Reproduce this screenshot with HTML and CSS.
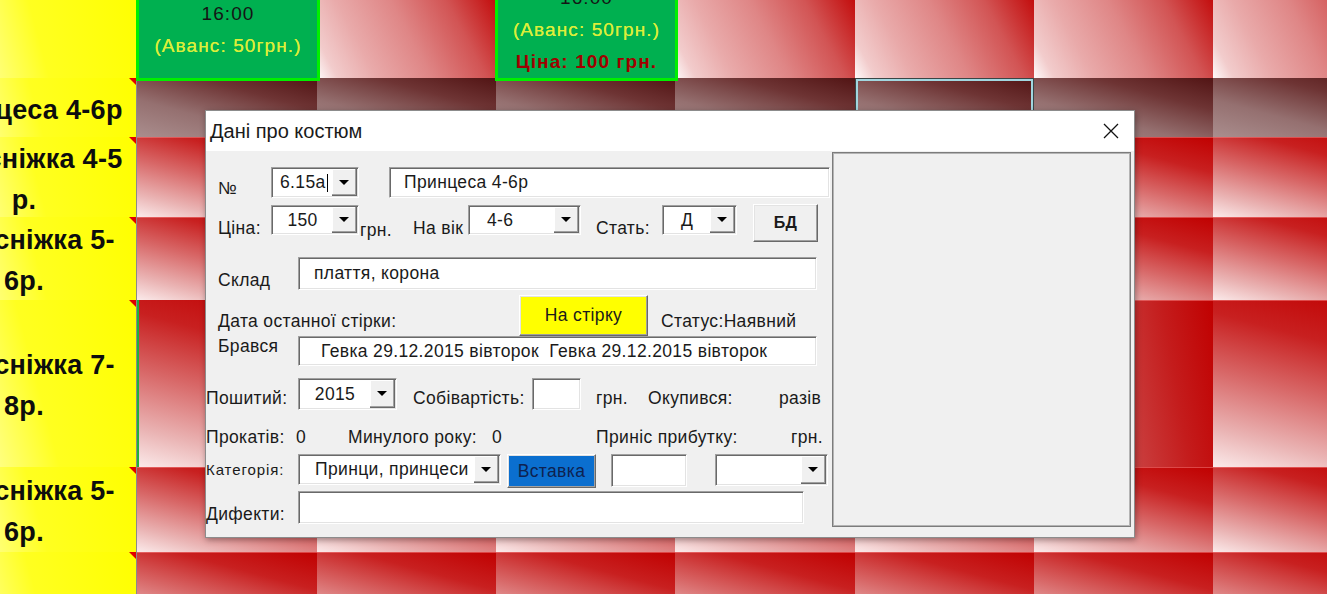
FILE: index.html
```html
<!DOCTYPE html>
<html lang="uk">
<head>
<meta charset="utf-8">
<title>Дані про костюм</title>
<link rel="stylesheet" href="styles.css">
</head>
<body>
<div class="sheet">
  <div class="cell y"></div>
  <div class="cell g"><div>16:00</div><div class="adv">(Аванс: 50грн.)</div></div>
  <div class="cell p"></div>
  <div class="cell g"><div>16:00</div><div class="adv">(Аванс: 50грн.)</div><div class="price">Ціна: 100 грн.</div></div>
  <div class="cell p"></div>
  <div class="cell p"></div>
  <div class="cell p"></div>
  <div class="cell p"></div>

  <div class="cell y name">Принцеса 4-6р</div>
  <div class="cell d"></div>
  <div class="cell d"></div>
  <div class="cell d"></div>
  <div class="cell d"></div>
  <div class="cell d sel"></div>
  <div class="cell d"></div>
  <div class="cell d"></div>

  <div class="cell y name">Білосніжка 4-5<br>р.</div>
  <div class="cell r"></div>
  <div class="cell r"></div>
  <div class="cell r"></div>
  <div class="cell r"></div>
  <div class="cell r"></div>
  <div class="cell r"></div>
  <div class="cell r"></div>

  <div class="cell y name">Білосніжка 5-<br>6р.</div>
  <div class="cell r"></div>
  <div class="cell r"></div>
  <div class="cell r"></div>
  <div class="cell r"></div>
  <div class="cell r"></div>
  <div class="cell r"></div>
  <div class="cell r"></div>

  <div class="cell y name">Білосніжка 7-<br>8р.</div>
  <div class="cell r gl"></div>
  <div class="cell r"></div>
  <div class="cell r"></div>
  <div class="cell r"></div>
  <div class="cell r"></div>
  <div class="cell h"></div>
  <div class="cell r"></div>

  <div class="cell y name">Білосніжка 5-<br>6р.</div>
  <div class="cell r"></div>
  <div class="cell r"></div>
  <div class="cell r"></div>
  <div class="cell r"></div>
  <div class="cell r"></div>
  <div class="cell r"></div>
  <div class="cell r"></div>

  <div class="cell y"></div>
  <div class="cell r"></div>
  <div class="cell r"></div>
  <div class="cell r"></div>
  <div class="cell r"></div>
  <div class="cell r"></div>
  <div class="cell r"></div>
  <div class="cell r"></div>
</div>

<div class="dialog">
  <div class="titlebar">
    <span>Дані про костюм</span>
    <svg class="close" width="16" height="16" viewBox="0 0 16 16"><path d="M1 1L15 15M15 1L1 15" stroke="#111" stroke-width="1.3" fill="none"/></svg>
  </div>
  <div class="body">
    <div class="form">
      <div class="row ra">
        <span class="lb">№</span>
        <div class="cb sunk"><div class="v">6.15a<span class="caret"></span></div><div class="dd"><i class="arr"></i></div></div>
        <div class="tb sunk">Принцеса 4-6р</div>
      </div>
      <div class="row rb">
        <span class="lb">Ціна:</span>
        <div class="cb sunk"><div class="v c">150</div><div class="dd"><i class="arr"></i></div></div>
        <span class="lb grn">грн.</span>
        <span class="lb">На вік</span>
        <div class="cb sunk"><div class="v">4-6</div><div class="dd"><i class="arr"></i></div></div>
        <span class="lb sex">Стать:</span>
        <div class="cb sunk"><div class="v c">Д</div><div class="dd"><i class="arr"></i></div></div>
        <div class="btn bd">БД</div>
      </div>
      <div class="row rc">
        <span class="lb">Склад</span>
        <div class="tb sunk">плаття, корона</div>
      </div>
      <div class="row rd">
        <span class="lb">Дата останної стірки:</span>
        <div class="btn wash">На стірку</div>
        <span class="lb st">Статус:Наявний</span>
      </div>
      <div class="row re">
        <span class="lb">Брався</span>
        <div class="tb sunk">Гевка 29.12.2015 вівторок&nbsp; Гевка 29.12.2015 вівторок</div>
      </div>
      <div class="row rf">
        <span class="lb">Пошитий:</span>
        <div class="cb sunk"><div class="v c">2015</div><div class="dd"><i class="arr"></i></div></div>
        <span class="lb pl">Собівартість:</span>
        <div class="tb sunk"></div>
        <span class="lb pl2">грн.</span>
        <span class="lb">Окупився:</span>
        <span class="lb">разів</span>
      </div>
      <div class="row rg">
        <span class="lb">Прокатів:</span>
        <span class="lb">0</span>
        <span class="lb">Минулого року:</span>
        <span class="lb">0</span>
        <span class="lb">Приніс прибутку:</span>
        <span class="lb">грн.</span>
      </div>
      <div class="row rh">
        <span class="lb small">Категорія:</span>
        <div class="cb sunk"><div class="v">Принци, принцеси</div><div class="dd"><i class="arr"></i></div></div>
        <div class="btn ins">Вставка</div>
        <div class="tb sunk"></div>
        <div class="cb sunk"><div class="v"></div><div class="dd"><i class="arr"></i></div></div>
      </div>
      <div class="row ri">
        <span class="lb">Дифекти:</span>
        <div class="tb sunk"></div>
      </div>
    </div>
    <div class="frame"></div>
  </div>
</div>
</body>
</html>
```

FILE: styles.css
```css
html, body {
  margin: 0;
  padding: 0;
}
body {
  width: 1327px;
  height: 594px;
  overflow: hidden;
  position: relative;
  background: #c00000;
  font-family: "Liberation Sans", Arial, sans-serif;
}

/* ---------- spreadsheet ---------- */
.sheet {
  display: grid;
  grid-template-columns: 225px 180px 179px 179px 180px 179px 179px 180px;
  grid-template-rows: 96px 59px 80px 83px 167px 85px 88px;
  margin: -18px 0 0 -88px;
  width: max-content;
}
.cell {
  position: relative;
  box-sizing: border-box;
}
.y {
  background: linear-gradient(75deg, #ffffe8 0%, #ffffa0 25%, #ffff20 55%, #ffff00 100%);
  border-right: 1px solid #8a8a8a;
}
.y::after {
  content: "";
  position: absolute;
  top: 0;
  right: 0;
  border-top: 7px solid #e00000;
  border-left: 7px solid transparent;
}
.name {
  display: flex;
  align-items: center;
  justify-content: center;
  text-align: center;
  font-weight: bold;
  font-size: 27px;
  letter-spacing: 0.3px;
  line-height: 41px;
  white-space: nowrap;
  color: #0d0d0d;
  padding-top: 5px;
}
.p {
  background: linear-gradient(62deg, #fefafa 0%, #f2cccc 9%, #e9aaaa 26%, #df8686 50%, #d25454 74%, #c00000 100%);
}
.d {
  background: linear-gradient(195deg, #521414 0%, #6e3434 30%, #957070 65%, #aa8e8e 100%);
}
.r {
  background: linear-gradient(15deg, #fbeaea 0%, #eab4b4 18%, #d86868 45%, #c82020 72%, #c00000 100%);
  box-shadow: inset 0 1px 0 rgba(255, 150, 150, 0.45);
}
.h {
  background: linear-gradient(80deg, #d47070 0%, #cc4c4c 40%, #c41c1c 75%, #c00000 100%);
  box-shadow: inset 0 1px 0 rgba(255, 150, 150, 0.45);
}
.gl {
  box-shadow: inset 2px 0 0 #1fae3c;
}
.sel {
  box-shadow: inset 0 0 0 1px #3a4646, inset 0 0 0 3px #a2d6df;
}
.g {
  background: #00b050;
  border: 3px solid #00f000;
  margin: 0 -3px -3px -1px;
  z-index: 1;
  display: flex;
  flex-direction: column;
  justify-content: center;
  align-items: center;
  font-size: 19px;
  letter-spacing: 1.1px;
  line-height: 32px;
  padding-bottom: 3px;
  color: #151515;
  white-space: nowrap;
}
.adv {
  color: #dcee3a;
  text-shadow: 0 0 0.4px #dcee3a;
}
.price {
  color: #a00000;
  font-weight: bold;
}

/* ---------- dialog ---------- */
.dialog {
  position: absolute;
  left: 205px;
  top: 110px;
  width: 930px;
  height: 428px;
  box-sizing: border-box;
  border: 1px solid #8c8c8c;
  background: #f0f0f0;
  box-shadow: 1px 2px 6px rgba(0, 0, 0, 0.35);
  display: flex;
  flex-direction: column;
  color: #1a1a1a;
}
.titlebar {
  height: 40px;
  flex: none;
  background: #fff;
  display: flex;
  align-items: center;
  justify-content: space-between;
  padding: 0 15px 0 4px;
  font-size: 20px;
}
.body {
  display: flex;
  flex: 1;
}
.form {
  width: 626px;
  flex: none;
  display: flex;
  flex-direction: column;
  font-size: 17.5px;
  letter-spacing: 0.35px;
}
.frame {
  width: 299px;
  height: 375px;
  margin-top: 1px;
  box-sizing: border-box;
  border: 1px solid #7c7c7c;
  box-shadow: inset 0 0 0 1px #b4b4b4;
  background: #f0f0f0;
}

.row {
  display: grid;
  align-items: start;
  flex: none;
}
.lb {
  line-height: 20px;
  white-space: nowrap;
}

.sunk {
  box-sizing: border-box;
  background: #fff;
  border: 1px solid;
  border-color: #a0a0a0 #ffffff #ffffff #a0a0a0;
  box-shadow: inset 1px 1px 0 #696969, inset -1px -1px 0 #e3e3e3;
}
.tb {
  display: flex;
  align-items: center;
  height: 100%;
  white-space: nowrap;
  overflow: hidden;
}
.cb {
  display: flex;
  height: 100%;
  padding: 1px;
}
.cb .v {
  flex: 1;
  display: flex;
  align-items: center;
  white-space: nowrap;
  overflow: hidden;
}
.cb .v.c {
  justify-content: center;
}
.dd {
  width: 25px;
  flex: none;
  box-sizing: border-box;
  background: #f0f0f0;
  border-right: 1px solid #696969;
  border-bottom: 1px solid #696969;
  box-shadow: inset -1px -1px 0 #a0a0a0, inset 1px 1px 0 #ffffff;
  display: flex;
  align-items: center;
  justify-content: center;
}
.arr {
  width: 0;
  height: 0;
  border-left: 5px solid transparent;
  border-right: 5px solid transparent;
  border-top: 5px solid #000;
}
.caret {
  display: inline-block;
  width: 1px;
  height: 18px;
  background: #000;
  margin-left: 1px;
}
.btn {
  box-sizing: border-box;
  height: 100%;
  display: flex;
  align-items: center;
  justify-content: center;
  background: #f0f0f0;
  border: 1px solid;
  border-color: #ffffff #696969 #696969 #ffffff;
  box-shadow: inset -1px -1px 0 #a0a0a0, inset 1px 1px 0 #e3e3e3;
  white-space: nowrap;
}

/* row A: № */
.ra {
  margin-top: 16px;
  height: 30px;
  padding-left: 12px;
  grid-template-columns: 53px 88px 471px;
}
.ra .lb { padding-top: 11px; }
.ra .tb { margin-left: 30px; padding-left: 14px; }
.ra .v { padding-left: 7px; }

/* row B: price */
.rb {
  margin-top: 7px;
  height: 38px;
  padding-left: 12px;
  grid-template-columns: 53px 88px 54px 55px 113px 81px 75px 81px;
}
.rb .lb { padding-top: 14px; }
.rb .grn { padding-top: 16px; padding-left: 1px; }
.rb .sex { padding-left: 15px; }
.rb .cb { margin-top: 1px; height: 30px; }
.rb .cb .v { padding-left: 17px; }
.rb .cb .v.c { padding-left: 0; }
.bd { width: 65px; justify-self: end; font-weight: bold; font-size: 16px; }

/* row C: склад */
.rc {
  margin-top: 15px;
  height: 31px;
  padding-left: 12px;
  grid-template-columns: 80px 519px;
}
.rc .lb { padding-top: 13px; }
.rc .tb { padding-left: 15px; }

/* row D: wash */
.rd {
  margin-top: 7px;
  height: 41px;
  padding-left: 12px;
  grid-template-columns: 301px 129px auto;
}
.rd .lb { padding-top: 16px; }
.rd .st { padding-left: 13px; }
.wash { background: #ffff00; }

/* row E: брався */
.re {
  height: 30px;
  padding-left: 12px;
  grid-template-columns: 80px 519px;
}
.re .tb { padding-left: 22px; }

/* row F: пошитий */
.rf {
  margin-top: 12px;
  height: 32px;
  grid-template-columns: 92px 99px 135px 49px 67px 131px auto;
}
.rf .lb { padding-top: 10px; }
.rf .pl { padding-left: 16px; }
.rf .pl2 { padding-left: 15px; }

/* row G: прокатів */
.rg {
  margin-top: 17px;
  height: 20px;
  grid-template-columns: 90px 52px 144px 104px 195px auto;
}

/* row H: категорія */
.rh {
  margin-top: 7px;
  height: 34px;
  grid-template-columns: 92px 203px 95px 91px 141px;
}
.rh .small { font-size: 15px; letter-spacing: 0.9px; padding-top: 6px; }
.rh .cb { height: 31px; }
.rh .cb .v { padding-left: 15px; }
.rh .cb:last-child { margin-left: 28px; height: 32px; }
.rh .tb { margin-left: 15px; height: 33px; }
.ins {
  margin-left: 6px;
  height: 34px;
  background: #0b6fcf;
  color: #0e2250;
}

/* row I: дифекти */
.ri {
  margin-top: 3px;
  height: 30px;
  grid-template-columns: 92px 506px;
}
.ri .lb { padding-top: 13px; }
```
